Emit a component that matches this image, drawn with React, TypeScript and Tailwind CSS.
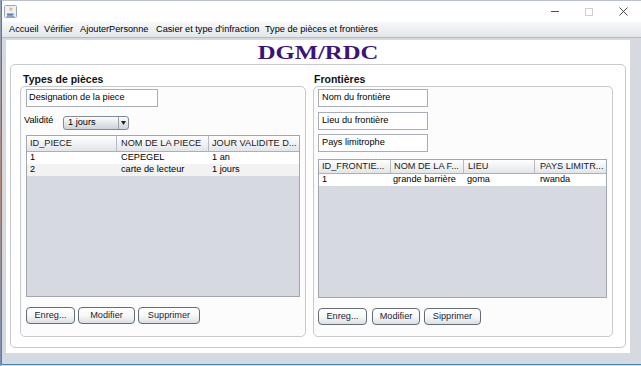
import React from "react";

function Btn({ label, cls }: { label: string; cls: string }) {
  return (
    <div
      className={
        "h-[17px] rounded-[4px] border border-[#646c76] bg-linear-to-b from-[#ffffff] via-[#f7f8f9] to-[#dcdfe4] flex items-center justify-center text-[9.2px] text-[#1d1f33] leading-none " +
        cls
      }
    >
      {label}
    </div>
  );
}

function Field({ label, cls }: { label: string; cls: string }) {
  return (
    <div className={"h-[18px] border border-[#a8aeb6] bg-white flex items-center leading-none " + cls}>
      {label}
    </div>
  );
}

export default function App() {
  return (
    <div className="w-[641px] h-[366px] bg-[#dfe3e8] flex overflow-hidden font-['Liberation_Sans',Arial,sans-serif] text-[9.2px] text-black">
      <div className="w-px h-full bg-linear-to-b from-[#8ea4bd] via-[#b08a7a] to-[#7a95b5]" />
      <div className="w-[640px] h-[365px] flex flex-col border-l border-b border-[#3f80c8] border-t border-t-[#b9c0c9] bg-[#d6d9df]">
        {/* title bar */}
        <div className="h-[21px] bg-white flex items-center">
          <div className="ml-[2px] w-[13px] h-[13px]">
            <svg width="13" height="13" viewBox="0 0 13 13">
              <rect x="0.5" y="0.5" width="12" height="12" rx="1" fill="#eef2f7" stroke="#9aa7b6" />
              <path d="M3 8.5h6v1.2c0 .6-.5 1-1 1H4c-.6 0-1-.4-1-1z" fill="#5a7fb0" />
              <path d="M9 8.8h.8c.5 0 .5 1 0 1H9" stroke="#5a7fb0" strokeWidth="0.6" fill="none" />
              <path d="M6 2.5c1.2 1-.8 1.6.2 3M7.5 3c.9.8-.5 1.4.3 2.4" stroke="#e07a2a" strokeWidth="0.9" fill="none" />
              <rect x="2.5" y="11" width="8" height="0.8" fill="#7d93b3" />
            </svg>
          </div>
          <div className="ml-auto flex h-full mr-px">
            <div className="w-[34px] h-full flex items-center justify-center">
              <div className="w-[8px] h-px bg-[#555]" />
            </div>
            <div className="w-[34px] h-full flex items-center justify-center">
              <div className="w-[8px] h-[8px] border border-[#cfcfcf]" />
            </div>
            <div className="w-[34px] h-full flex items-center justify-center">
              <svg width="9" height="9" viewBox="0 0 9 9">
                <path d="M0.5 0.5L8.5 8.5M8.5 0.5L0.5 8.5" stroke="#333" strokeWidth="0.9" />
              </svg>
            </div>
          </div>
        </div>
        {/* menu bar */}
        <div className="h-[16px] bg-linear-to-b from-[#f7f8f9] to-[#e4e7ea] border-b border-[#b3bac3] flex items-center pl-[7px] whitespace-nowrap leading-none">
          <div className="w-[35px]">Accueil</div>
          <div className="w-[36px]">Vérifier</div>
          <div className="w-[76px]">AjouterPersonne</div>
          <div className="w-[109px]">Casier et type d'infraction</div>
          <div>Type de pièces et frontières</div>
        </div>
        {/* content */}
        <div className="flex-1 pt-[2px] pl-[4px] pr-[12px] pb-[11px] flex">
          <div className="flex-1 bg-white px-[4px] pb-[5px] flex flex-col">
            <div className="h-[24px] flex items-center justify-center">
              <span className="inline-block scale-x-[1.37] font-['Liberation_Serif','Times_New_Roman',serif] font-bold text-[18px] leading-none text-[#3c1478] pt-[1px]">
                DGM/RDC
              </span>
            </div>
            <div className="flex-1 rounded-[5px] border border-[#c6c9ce] bg-white pl-[9px] pr-[12px] pb-[10px] flex gap-[7px]">
              {/* left column */}
              <div className="w-[286px] flex flex-col">
                <div className="h-[21px] pt-[8px] pl-[3px] font-bold text-[10.5px] leading-[13px] text-[#111]">Types de pièces</div>
                <div className="flex-1 rounded-[5px] border border-[#c6c9ce] bg-[#fcfcfc] pl-[3px] pt-[2px] flex flex-col">
                  <Field label="Designation de la piece" cls="ml-[2px] w-[132px] pl-[2px]" />
                  <div className="mt-[8px] h-[14px] flex items-start">
                    <div className="w-[39px] leading-[10px]">Validité</div>
                    <div className="mt-px w-[66px] h-[14px] rounded-[3px] border border-[#7f8b99] bg-linear-to-b from-[#fdfdfd] to-[#cdd2d9] flex items-center">
                      <div className="flex-1 pl-[4px] leading-none">1 jours</div>
                      <div className="w-[10px] h-full border-l border-[#9aa3ae] flex items-center justify-center">
                        <svg width="5" height="4" viewBox="0 0 5 4">
                          <path d="M0 0H5L2.5 4z" fill="#222" />
                        </svg>
                      </div>
                    </div>
                  </div>
                  <div className="ml-[2px] mt-[6px] w-[274px] h-[162px] border border-[#a0a7b0] bg-[#d6d9df] flex flex-col">
                    <div className="h-[16px] flex bg-linear-to-b from-[#ffffff] to-[#e2e5e9] border-b border-[#a9b0b8] items-center leading-none text-[#1a1a1a] whitespace-nowrap">
                      <div className="w-[90px] h-full border-r border-[#b6bcc4] pl-[3px] flex items-center">ID_PIECE</div>
                      <div className="w-[92px] h-full border-r border-[#b6bcc4] pl-[4px] flex items-center">NOM DE LA PIECE</div>
                      <div className="flex-1 h-full pl-[3px] flex items-center">JOUR VALIDITE D...</div>
                    </div>
                    <div className="h-[12px] bg-white flex items-center leading-none whitespace-nowrap">
                      <div className="w-[90px] pl-[3px]">1</div>
                      <div className="w-[92px] pl-[4px]">CEPEGEL</div>
                      <div className="flex-1 pl-[3px]">1 an</div>
                    </div>
                    <div className="h-[12px] bg-[#f2f2f2] flex items-center leading-none whitespace-nowrap">
                      <div className="w-[90px] pl-[3px]">2</div>
                      <div className="w-[92px] pl-[4px]">carte de lecteur</div>
                      <div className="flex-1 pl-[3px]">1 jours</div>
                    </div>
                  </div>
                  <div className="mt-[10px] ml-[2px] flex">
                    <Btn label="Enreg..." cls="w-[49px]" />
                    <Btn label="Modifier" cls="ml-[3px] w-[57px]" />
                    <Btn label="Supprimer" cls="ml-[3px] w-[62px]" />
                  </div>
                </div>
              </div>
              {/* right column */}
              <div className="w-[300px] flex flex-col">
                <div className="h-[21px] pt-[8px] pl-[1px] font-bold text-[10.5px] leading-[13px] text-[#111]">Frontières</div>
                <div className="flex-1 rounded-[5px] border border-[#c6c9ce] bg-[#fcfcfc] pl-[4px] pt-[2px] flex flex-col">
                  <Field label="Nom du frontière" cls="w-[110px] pl-[3px]" />
                  <Field label="Lieu du frontière" cls="mt-[5px] w-[110px] pl-[3px]" />
                  <Field label="Pays limitrophe" cls="mt-[4px] w-[110px] pl-[3px]" />
                  <div className="mt-[7px] w-[289px] h-[139px] border border-[#a0a7b0] bg-[#d6d9df] flex flex-col">
                    <div className="h-[14px] flex bg-linear-to-b from-[#ffffff] to-[#e2e5e9] border-b border-[#a9b0b8] items-center leading-none text-[#1a1a1a] whitespace-nowrap">
                      <div className="w-[72px] h-full border-r border-[#b6bcc4] pl-[3px] flex items-center">ID_FRONTIE...</div>
                      <div className="w-[73px] h-full border-r border-[#b6bcc4] pl-[3px] flex items-center">NOM DE LA F...</div>
                      <div className="w-[71px] h-full border-r border-[#b6bcc4] pl-[4px] flex items-center">LIEU</div>
                      <div className="flex-1 h-full pl-[5px] flex items-center">PAYS LIMITR...</div>
                    </div>
                    <div className="h-[12px] bg-white flex items-center leading-none whitespace-nowrap">
                      <div className="w-[72px] pl-[3px]">1</div>
                      <div className="w-[73px] pl-[2px]">grande barrière</div>
                      <div className="w-[71px] pl-[3px]">goma</div>
                      <div className="flex-1 pl-[5px]">rwanda</div>
                    </div>
                  </div>
                  <div className="mt-[10px] flex">
                    <Btn label="Enreg..." cls="w-[49px]" />
                    <Btn label="Modifier" cls="ml-[5px] w-[48px]" />
                    <Btn label="Sipprimer" cls="ml-[4px] w-[57px]" />
                  </div>
                </div>
              </div>
            </div>
          </div>
        </div>
      </div>
    </div>
  );
}
